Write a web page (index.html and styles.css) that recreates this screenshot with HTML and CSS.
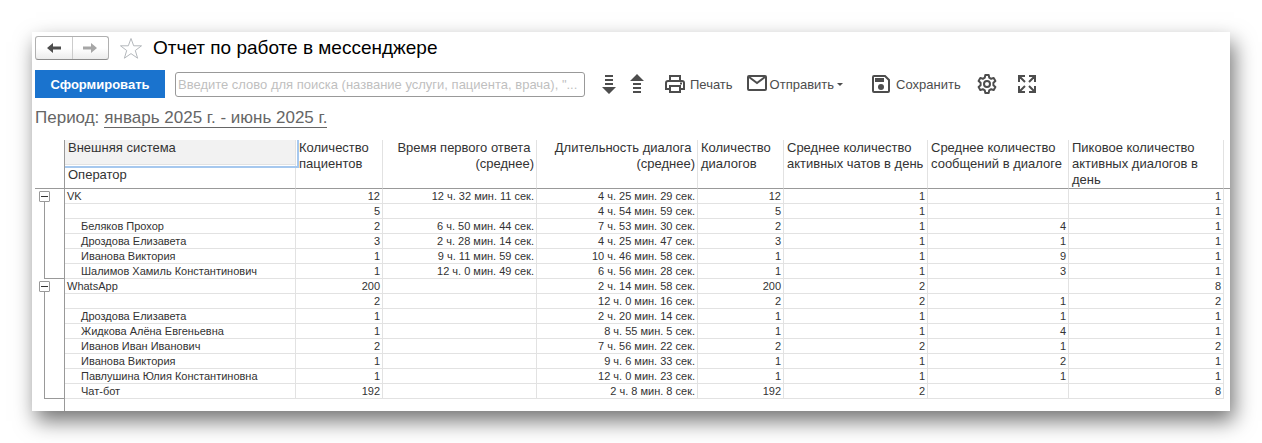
FILE: index.html
```html
<!DOCTYPE html>
<html lang="ru">
<head>
    <meta charset="UTF-8">
    <meta name="viewport" content="width=device-width, initial-scale=1.0">
    <title>Отчет по работе в мессенджере</title>
    <link rel="stylesheet" href="styles.css">
</head>
<body>
    <main class="window">
        <header class="title-bar">
            <div class="nav">
                <button type="button" aria-label="Назад">
                    <svg width="14" height="12" viewBox="0 0 14 12"><path d="M0 6L6 1V4.500H14V7.500H6V11Z" fill="#4d4d4d"/></svg>
                </button>
                <button type="button" aria-label="Вперед">
                    <svg width="14" height="12" viewBox="0 0 14 12"><path d="M14 6L8 1V4.500H0V7.500H8V11Z" fill="#a6a6a6"/></svg>
                </button>
            </div>
            <button type="button" class="star" aria-label="В избранное">
                <svg width="24" height="23" viewBox="0 0 24 23"><path d="M12 1.500L14.700 8.800H22.500L16.300 13.500L18.600 21.200L12 16.600L5.400 21.200L7.700 13.500L1.500 8.800H9.300Z" fill="#fff" stroke="#b4b8bc"/></svg>
            </button>
            <h1>Отчет по работе в мессенджере</h1>
        </header>

        <div class="toolbar">
            <button type="button" class="run">Сформировать</button>
            <input type="text" class="search" aria-label="Поиск" placeholder="Введите слово для поиска (название услуги, пациента, врача), &quot;...">
            <div class="tools">
                <button type="button" class="tool arrow" aria-label="Развернуть группы">
                    <svg width="14" height="20" viewBox="0 0 14 20"><path d="M3 1H11V3H3ZM3 5H11V7H3ZM3 9H11V11H3ZM3 13H0L7 20L14 13Z" fill="#4d4d4d"/></svg>
                </button>
                <button type="button" class="tool arrow" aria-label="Свернуть группы">
                    <svg width="14" height="20" viewBox="0 0 14 20"><path d="M0 7L7 0L14 7ZM3 9H11V11H3ZM3 13H11V15H3ZM3 17H11V19H3Z" fill="#4d4d4d"/></svg>
                </button>
                <button type="button" class="tool print">
                    <svg width="20" height="20" viewBox="0 0 20 20" fill="none" stroke="#4d4d4d" stroke-width="2"><path d="M5 6V2H15V6M5 15H1V9Q1 7 3 7H17Q19 7 19 9V15H15"/><path d="M5 12H15V18H5Z"/><path d="M15 9.500H17"/></svg>
                    Печать
                </button>
                <button type="button" class="tool send">
                    <svg width="20" height="18" viewBox="0 0 20 18" fill="none" stroke="#4d4d4d" stroke-width="2"><rect x="1" y="1" width="18" height="14" rx="1"/><path d="M2 2L10 8L18 2"/></svg>
                    Отправить
                    <span class="caret"></span>
                </button>
                <button type="button" class="tool save">
                    <svg width="18" height="18" viewBox="0 0 18 18"><path d="M2 1H13L17 5V16Q17 17 16 17H2Q1 17 1 16V2Q1 1 2 1Z" fill="none" stroke="#4d4d4d" stroke-width="2"/><path d="M3 3H12V7H3Z" fill="#4d4d4d"/><circle cx="9" cy="12" r="3" fill="#4d4d4d"/></svg>
                    Сохранить
                </button>
                <button type="button" class="tool" aria-label="Настройки">
                    <svg width="20" height="20" viewBox="0 0 20 20" fill="none" stroke="#4d4d4d" stroke-width="2"><path stroke-linejoin="round" d="M8.300 1H11.700L12.200 3.600L14.200 4.800L16.700 3.900L18.400 6.900L16.400 8.700V11.300L18.400 13.100L16.700 16.100L14.200 15.200L12.200 16.400L11.700 19H8.300L7.800 16.400L5.800 15.200L3.300 16.100L1.600 13.100L3.600 11.300V8.700L1.600 6.900L3.300 3.900L5.800 4.800L7.800 3.600Z"/><circle cx="10" cy="10" r="3"/></svg>
                </button>
                <button type="button" class="tool full" aria-label="Во весь экран">
                    <svg width="18" height="18" viewBox="0 0 18 18" fill="none" stroke="#4d4d4d" stroke-width="2"><path d="M1 7V1H7M11 1H17V7M17 11V17H11M7 17H1V11M1 1L7 7M17 1L11 7M17 17L11 11M1 17L7 11"/></svg>
                </button>
            </div>
        </div>

        <div class="period">
            <span>Период:</span>
            <a href="#">январь 2025 г. - июнь 2025 г.</a>
        </div>

        <table class="report">
            <colgroup>
                <col class="col-tree">
                <col>
                <col class="col-patients">
                <col class="col-answer">
                <col class="col-duration">
                <col class="col-dialogs">
                <col class="col-chats">
                <col class="col-messages">
                <col class="col-peak">
                <col class="col-end">
            </colgroup>
            <thead>
                <tr>
                    <td rowspan="2" class="tree"></td>
                    <th class="selected">Внешняя система</th>
                    <th rowspan="2">Количество пациентов</th>
                    <th rowspan="2" class="right">Время первого ответа&nbsp; (среднее)</th>
                    <th rowspan="2" class="right">Длительность диалога&nbsp; (среднее)</th>
                    <th rowspan="2">Количество диалогов</th>
                    <th rowspan="2">Среднее количество активных чатов в день</th>
                    <th rowspan="2">Среднее количество сообщений в диалоге</th>
                    <th rowspan="2">Пиковое количество активных диалогов в день</th>
                    <td rowspan="2" class="end"></td>
                </tr>
                <tr>
                    <th class="operator">Оператор</th>
                </tr>
            </thead>
            <tbody id="rows"></tbody>
        </table>
    </main>

    <script>
        const groups = [
            [
                ["VK", "12", "12 ч. 32 мин. 11 сек.", "4 ч. 25 мин. 29 сек.", "12", "1", "", "1"],
                ["", "5", "", "4 ч. 54 мин. 59 сек.", "5", "1", "", "1"],
                ["Беляков Прохор", "2", "6 ч. 50 мин. 44 сек.", "7 ч. 53 мин. 30 сек.", "2", "1", "4", "1"],
                ["Дроздова Елизавета", "3", "2 ч. 28 мин. 14 сек.", "4 ч. 25 мин. 47 сек.", "3", "1", "1", "1"],
                ["Иванова Виктория", "1", "9 ч. 11 мин. 59 сек.", "10 ч. 46 мин. 58 сек.", "1", "1", "9", "1"],
                ["Шалимов Хамиль Константинович", "1", "12 ч. 0 мин. 49 сек.", "6 ч. 56 мин. 28 сек.", "1", "1", "3", "1"]
            ],
            [
                ["WhatsApp", "200", "", "2 ч. 14 мин. 58 сек.", "200", "2", "", "8"],
                ["", "2", "", "12 ч. 0 мин. 16 сек.", "2", "2", "1", "2"],
                ["Дроздова Елизавета", "1", "", "2 ч. 20 мин. 14 сек.", "1", "1", "1", "1"],
                ["Жидкова Алёна Евгеньевна", "1", "", "8 ч. 55 мин. 5 сек.", "1", "1", "4", "1"],
                ["Иванов Иван Иванович", "2", "", "7 ч. 56 мин. 22 сек.", "2", "2", "1", "2"],
                ["Иванова Виктория", "1", "", "9 ч. 6 мин. 33 сек.", "1", "1", "2", "1"],
                ["Павлушина Юлия Константиновна", "1", "", "12 ч. 0 мин. 23 сек.", "1", "1", "1", "1"],
                ["Чат-бот", "192", "", "2 ч. 8 мин. 8 сек.", "192", "2", "", "8"]
            ]
        ];

        function treeCell(index, count) {
            if (index === 0) {
                return '<td class="tree"><button type="button" class="toggle" aria-label="Свернуть"></button><div class="stub"></div></td>';
            }
            const last = index === count - 1 ? " last" : "";
            return `<td class="tree"><div class="branch${last}"></div></td>`;
        }

        let html = "";
        groups.forEach(rows => {
            rows.forEach((row, index) => {
                const nameClass = index === 0 ? "name group" : "name";
                const values = row.slice(1).map(value => `<td>${value}</td>`).join("");
                html += `<tr>${treeCell(index, rows.length)}<td class="${nameClass}">${row[0]}</td>${values}<td class="end"></td></tr>`;
            });
        });
        html += '<tr class="tail"><td class="tree"></td><td colspan="9" class="end"></td></tr>';
        document.getElementById("rows").innerHTML = html;
    </script>
</body>
</html>
```
FILE: styles.css
```css
* {
    box-sizing: border-box;
}
body {
    margin: 0;
    padding: 32px;
    background: #fff;
    font-family: "Liberation Sans", Arial, sans-serif;
    color: #333;
}
.window {
    background: #fff;
    padding: 4px 0 0 3px;
    box-shadow: 4px 10px 20px rgba(0, 0, 0, 0.55);
}
button {
    font-family: inherit;
    padding: 0;
    border: none;
    background: none;
    cursor: pointer;
}
svg {
    display: block;
    flex: none;
}
.title-bar {
    display: flex;
    align-items: center;
    height: 24px;
}
.nav {
    display: flex;
    width: 74px;
    height: 24px;
    border: 1px solid #b0b0b0;
    border-bottom-color: #8c8c8c;
    border-radius: 3px;
    background: linear-gradient(#fff 50%, #ececec);
}
.nav button {
    flex: 1;
    display: flex;
    align-items: center;
    justify-content: center;
}
.nav button + button {
    border-left: 1px solid #ccc;
}
.star {
    margin: 0 10px;
}
h1 {
    margin: 0;
    font-size: 19px;
    font-weight: normal;
    color: #000;
}
.toolbar {
    display: flex;
    align-items: center;
    margin-top: 10px;
}
.run {
    width: 130px;
    height: 28px;
    background: #1a73ce;
    color: #fff;
    font-size: 13px;
    font-weight: bold;
}
.search {
    width: 410px;
    height: 25px;
    margin-left: 10px;
    padding: 0 2px;
    border: 1px solid #999;
    border-radius: 3px;
    font-family: inherit;
    font-size: 13px;
    color: #333;
}
.search::placeholder {
    color: #bfbfbf;
}
.tools {
    display: flex;
    align-items: center;
    margin-left: 17px;
}
.tool {
    display: flex;
    align-items: center;
    gap: 5px;
    font-size: 13px;
    color: #4d4d4d;
}
.arrow {
    margin-right: 14px;
}
.print {
    margin: 0 14px 0 7px;
}
.send {
    gap: 3px;
}
.caret {
    border: 3px solid transparent;
    border-top-color: #4d4d4d;
    border-bottom: none;
}
.save {
    gap: 6px;
    margin: 0 16px 0 29px;
}
.full {
    margin-left: 21px;
}
.period {
    display: flex;
    gap: 5px;
    margin-top: 11px;
    font-size: 17px;
    line-height: 18px;
    color: #666;
}
.period a {
    color: #666;
    text-decoration: none;
    border-bottom: 1px solid #666;
}
.report {
    width: 100%;
    margin-top: 12px;
    table-layout: fixed;
    border-collapse: separate;
    border-spacing: 0;
    font-size: 11px;
    line-height: 14px;
}
.col-tree {
    width: 30px;
}
.col-patients {
    width: 87px;
}
.col-answer {
    width: 154px;
}
.col-duration {
    width: 161px;
}
.col-dialogs {
    width: 86px;
}
.col-chats {
    width: 144px;
}
.col-messages {
    width: 141px;
}
.col-peak {
    width: 155px;
}
.col-end {
    width: 6px;
}
th {
    height: 49px;
    padding: 0 0 0 3px;
    border-right: 1px solid #e2e2e2;
    border-bottom: 1px solid #999;
    font-size: 13px;
    font-weight: normal;
    line-height: 16px;
    text-align: left;
    vertical-align: top;
}
th.right {
    padding: 0 2px 0 0;
    text-align: right;
}
th.selected {
    position: relative;
    height: 25px;
    background: #f2f2f2;
    border-bottom-color: #e2e2e2;
}
/* selection frame of the current cell */
th.selected::after {
    content: "";
    position: absolute;
    inset: 0 -4px -4px 0;
    border: solid #a6c8ee;
    border-width: 0 2px 2px 0;
}
th.operator {
    height: 24px;
    padding-top: 2px;
}
td {
    height: 15px;
    padding: 0 2px 0 0;
    border-right: 1px solid #e2e2e2;
    border-bottom: 1px solid #e2e2e2;
    text-align: right;
}
td.name {
    padding: 0 0 0 16px;
    text-align: left;
}
td.group {
    padding-left: 2px;
}
td.tree {
    padding: 0;
    border-right-color: #999;
    border-bottom: none;
    vertical-align: top;
}
thead td.tree {
    border-bottom: 1px solid #999;
}
td.end {
    padding: 0;
    border: none;
}
thead td.end {
    border-bottom: 1px solid #999;
}
.toggle {
    display: block;
    width: 11px;
    height: 11px;
    margin: 2px 0 0 4px;
    border: 1px solid #999;
    border-radius: 1px;
    background: linear-gradient(#333, #333) center / 7px 1px no-repeat;
}
.stub,
.branch {
    height: 2px;
    margin-left: 9px;
    border-left: 1px solid #999;
}
.branch {
    height: 15px;
}
.branch.last {
    border-bottom: 1px solid #999;
}
.tail td {
    height: 12px;
}
```
